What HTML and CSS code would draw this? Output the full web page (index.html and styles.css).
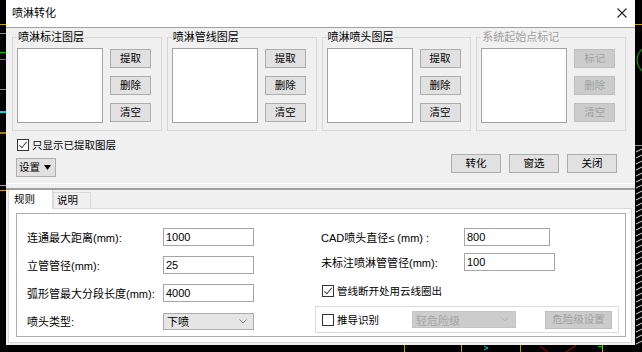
FILE: index.html
```html
<!DOCTYPE html>
<html lang="zh-CN">
<head>
    <meta charset="UTF-8">
    <title>喷淋转化</title>
    <link rel="stylesheet" href="styles.css">
</head>
<body>

    <!-- CAD drawing behind the dialog -->
    <svg class="cad" width="642" height="352" viewBox="0 0 642 352">
        <g stroke-width="1" fill="none">
            <line x1="0" y1="24.5" x2="6" y2="24.5" stroke="#c8a000"/>
            <line x1="0" y1="33.5" x2="6" y2="33.5" stroke="#909090"/>
            <line x1="0" y1="52.5" x2="6" y2="52.5" stroke="#00c000"/>
            <line x1="0" y1="59.5" x2="6" y2="59.5" stroke="#00c000"/>
            <line x1="0" y1="89.5" x2="6" y2="89.5" stroke="#909090"/>
            <line x1="0" y1="112" x2="6" y2="112" stroke="#00d8d8" stroke-width="2"/>
            <line x1="0" y1="133" x2="6" y2="133" stroke="#a07800" stroke-width="2"/>
            <line x1="0" y1="185.5" x2="6" y2="185.5" stroke="#e0a000"/>
            <line x1="0" y1="190.5" x2="6" y2="190.5" stroke="#c8a000"/>
            <line x1="635" y1="24.5" x2="642" y2="24.5" stroke="#c8a000"/>
            <circle cx="652" cy="60" r="15" stroke="#00c000"/>
            <line x1="635" y1="145.5" x2="642" y2="145.5" stroke="#909090"/>
            <path d="M636 152l6-3M636 158l6-3M636 164l6-3M636 170l6-3M636 176l6-3M636 182l6-3M636 188l6-3M636 194l6-3M636 200l6-3M636 206l6-3M636 212l6-3M636 218l6-3M636 224l6-3M636 230l6-3M636 236l6-3M636 242l6-3M636 248l6-3M636 254l6-3M636 260l6-3M636 266l6-3M636 272l6-3M636 278l6-3M636 284l6-3M636 290l6-3M636 296l6-3M636 302l6-3M636 308l6-3M636 314l6-3M636 320l6-3M636 326l6-3M636 332l6-3M636 338l6-3M636 344l6-3" stroke="#d8d8d8"/>
            <line x1="404.5" y1="345" x2="404.5" y2="352" stroke="#c8a000"/>
            <line x1="461.5" y1="345" x2="461.5" y2="352" stroke="#c8a000"/>
            <line x1="520.5" y1="345" x2="520.5" y2="352" stroke="#c8a000"/>
            <path d="M484 346l4 2-4 2" stroke="#00d8d8"/>
            <path d="M540 346l8 6M566 352l10-7" stroke="#c00000"/>
            <line x1="598" y1="346.5" x2="602" y2="346.5" stroke="#00c000"/>
            <line x1="602.5" y1="345" x2="602.5" y2="352" stroke="#c8a000"/>
        </g>
    </svg>

    <div class="dialog">
        <div class="titlebar">
            <span class="title">喷淋转化</span>
            <svg class="close" width="10" height="10" viewBox="0 0 10 10">
                <path d="M0.5 0.5L9.5 9.5M9.5 0.5L0.5 9.5" stroke="#222" stroke-width="1.1"/>
            </svg>
        </div>

        <div class="top-panel">
            <div class="groups">
                <fieldset class="layer-group">
                    <legend>喷淋标注图层</legend>
                    <div class="layer-body">
                        <div class="listbox"></div>
                        <div class="btn-col">
                            <button class="btn">提取</button>
                            <button class="btn">删除</button>
                            <button class="btn">清空</button>
                        </div>
                    </div>
                </fieldset>
                <fieldset class="layer-group">
                    <legend>喷淋管线图层</legend>
                    <div class="layer-body">
                        <div class="listbox"></div>
                        <div class="btn-col">
                            <button class="btn">提取</button>
                            <button class="btn">删除</button>
                            <button class="btn">清空</button>
                        </div>
                    </div>
                </fieldset>
                <fieldset class="layer-group">
                    <legend>喷淋喷头图层</legend>
                    <div class="layer-body">
                        <div class="listbox"></div>
                        <div class="btn-col">
                            <button class="btn">提取</button>
                            <button class="btn">删除</button>
                            <button class="btn">清空</button>
                        </div>
                    </div>
                </fieldset>
                <fieldset class="layer-group disabled">
                    <legend>系统起始点标记</legend>
                    <div class="layer-body">
                        <div class="listbox"></div>
                        <div class="btn-col">
                            <button class="btn">标记</button>
                            <button class="btn">删除</button>
                            <button class="btn">清空</button>
                        </div>
                    </div>
                </fieldset>
            </div>

            <div class="actions">
                <div class="left-actions">
                    <label class="check"><span class="box checked"></span>只显示已提取图层</label>
                    <button class="btn btn-menu">设置
                        <svg width="7" height="5" viewBox="0 0 7 5"><polygon points="0,0 7,0 3.5,5" fill="#000"/></svg>
                    </button>
                </div>
                <div class="right-actions">
                    <button class="btn btn-wide">转化</button>
                    <button class="btn btn-wide">窗选</button>
                    <button class="btn btn-wide">关闭</button>
                </div>
            </div>
        </div>

        <div class="splitter"></div>

        <div class="bottom-panel">
            <div class="tabs">
                <span class="tab active">规则</span>
                <span class="tab">说明</span>
            </div>
            <div class="tab-page">
                <div class="rules">
                    <div class="col-left">
                        <div class="row">
                            <span class="field-label">连通最大距离(mm):</span>
                            <span class="input">1000</span>
                        </div>
                        <div class="row">
                            <span class="field-label">立管管径(mm):</span>
                            <span class="input">25</span>
                        </div>
                        <div class="row">
                            <span class="field-label">弧形管最大分段长度(mm):</span>
                            <span class="input">4000</span>
                        </div>
                        <div class="row">
                            <span class="field-label">喷头类型:</span>
                            <span class="select">下喷
                                <svg width="8" height="5" viewBox="0 0 8 5"><path d="M0.5 0.5L4 4L7.5 0.5" stroke="#777" fill="none"/></svg>
                            </span>
                        </div>
                    </div>
                    <div class="col-right">
                        <div class="row row-1">
                            <span class="field-label">CAD喷头直径≤ (mm) :</span>
                            <span class="input input-short">800</span>
                        </div>
                        <div class="row row-2">
                            <span class="field-label">未标注喷淋管管径(mm):</span>
                            <span class="input">100</span>
                        </div>
                        <div class="row row-3">
                            <label class="check"><span class="box checked"></span>管线断开处用云线圈出</label>
                        </div>
                        <div class="subbox">
                            <label class="check sub-check"><span class="box"></span>推导识别</label>
                            <span class="select select-off">轻危险级
                                <svg width="8" height="5" viewBox="0 0 8 5"><path d="M0.5 0.5L4 4L7.5 0.5" stroke="#b4b4b4" fill="none"/></svg>
                            </span>
                            <button class="btn btn-off">危险级设置</button>
                        </div>
                    </div>
                </div>
            </div>
        </div>
    </div>

</body>
</html>
```

FILE: styles.css
```css
* {
    box-sizing: border-box;
}
body {
    margin: 0;
    width: 642px;
    height: 352px;
    overflow: hidden;
    position: relative;
    background-color: #000;
    font-family: "Liberation Sans", "Noto Sans CJK SC", sans-serif;
    font-size: 11px;
    color: #000;
}
.cad {
    position: absolute;
    left: 0;
    top: 0;
}
.dialog {
    position: relative;
    margin-left: 6px;
    width: 629px;
    height: 345px;
    background-color: #f0f0f0;
    display: flex;
    flex-direction: column;
}
.titlebar {
    flex: none;
    height: 28px;
    background-color: #fff;
    border-bottom: 1px solid #a0a0a0;
    display: flex;
    align-items: center;
    justify-content: space-between;
    padding: 0 8px 1px 6px;
}
.title {
    font-size: 11px;
    line-height: 13px;
}

/* layer groups */
.top-panel {
    flex: none;
    padding: 3px 9px 6px 6px;
    border-bottom: 1px solid #fff;
}
.groups {
    display: flex;
    gap: 5px;
}
.layer-group {
    flex: 1;
    min-width: 0;
    margin: 0;
    padding: 4px 8px 7px 4px;
    border: 1px solid #d8d8d8;
}
.layer-group legend {
    padding: 0 1px;
    font-size: 11px;
    line-height: 13px;
}
.layer-group.disabled legend {
    color: #a0a0a0;
}
.layer-body {
    display: flex;
}
.listbox {
    width: 86px;
    height: 75px;
    background-color: #fff;
    border: 1px solid #a3a3a3;
}
.btn-col {
    margin-left: 7px;
    padding-top: 1px;
    display: flex;
    flex-direction: column;
    gap: 8px;
}
.btn {
    width: 41px;
    height: 19px;
    padding: 0;
    background-color: #e1e1e1;
    border: 1px solid #adadad;
    font-family: inherit;
    font-size: 10.5px;
    line-height: 15px;
    color: #000;
}
.disabled .btn,
.btn-off {
    background-color: #cccccc;
    border-color: #bfbfbf;
    color: #a0a0a0;
}

/* under the groups */
.actions {
    display: flex;
    justify-content: space-between;
}
.left-actions {
    display: flex;
    flex-direction: column;
    align-items: flex-start;
    gap: 7px;
    padding: 8px 0 0 5px;
}
.check {
    display: flex;
    align-items: center;
    gap: 3px;
    font-size: 10.5px;
    line-height: 12px;
    height: 12px;
}
.box {
    width: 12px;
    height: 12px;
    background: #fff;
    border: 1px solid #333;
    position: relative;
}
.box.checked::after {
    content: "";
    position: absolute;
    left: 3px;
    top: 0px;
    width: 3px;
    height: 7px;
    border: solid #444;
    border-width: 0 1px 1px 0;
    transform: rotate(40deg);
}
.btn-menu {
    margin-left: -1px;
    width: 40px;
    display: flex;
    align-items: center;
    gap: 4px;
    padding-left: 2px;
}
.right-actions {
    align-self: flex-end;
    display: flex;
    gap: 8px;
    margin: 0 9px 4px 0;
}
.btn-wide {
    width: 50px;
}

/* tab area */
.splitter {
    flex: none;
    height: 4px;
}
.bottom-panel {
    flex: 1;
    border-top: 2px solid #a0a0a0;
    padding: 0 3px 2px 2px;
}
.tabs {
    display: flex;
    align-items: flex-start;
    height: 18px;
}
.tab {
    position: relative;
    z-index: 1;
    height: 16px;
    margin-top: 2px;
    padding: 0 3px;
    width: 38px;
    background-color: #f0f0f0;
    border: 1px solid #d9d9d9;
    border-bottom: none;
    font-size: 10.5px;
    line-height: 15px;
}
.tab.active {
    width: 45px;
    height: 19px;
    margin-top: 0;
    padding: 2px 5px 0;
    background-color: #fff;
    border-top: none;
}
.tab-page {
    height: 135px;
    background-color: #fff;
    border: 1px solid #d9d9d9;
    padding: 4px 5px 5px 7px;
}
.rules {
    height: 124px;
    border: 1px solid #adadad;
    padding: 9px 6px 0 0;
    display: flex;
}
.col-left {
    width: 299px;
}
.col-right {
    flex: 1;
    display: flex;
    flex-direction: column;
}
.row {
    display: flex;
    align-items: center;
    height: 28px;
}
.col-left .field-label {
    width: 146px;
    padding-left: 10px;
}
.col-right .field-label {
    width: 149px;
    padding-left: 6px;
}
.field-label {
    font-size: 11px;
}
.input {
    width: 91px;
    height: 18px;
    border: 1px solid #a5a5a5;
    background: #fff;
    padding-left: 2px;
    line-height: 16px;
    font-size: 11px;
}
.input-short {
    width: 86px;
}
.select {
    width: 91px;
    height: 17px;
    border: 1px solid #acacac;
    background-color: #e5e5e5;
    display: flex;
    align-items: center;
    justify-content: space-between;
    padding: 0 6px 0 3px;
    font-size: 11px;
}
.row-2 {
    height: 22px;
}
.row-3 {
    height: 30px;
    margin-top: 3px;
    padding-left: 7px;
}
.row-3 .check {
    font-size: 10.5px;
}
.subbox {
    height: 27px;
    border: 1px solid #dcdcdc;
    display: flex;
    align-items: center;
    padding: 0 6px;
}
.sub-check {
    width: 90px;
}
.select-off {
    width: 104px;
    background-color: #cccccc;
    border-color: #c4c4c4;
    color: #a6a6a6;
}
.btn-off {
    width: 67px;
    height: 18px;
    margin-left: 29px;
}
```
